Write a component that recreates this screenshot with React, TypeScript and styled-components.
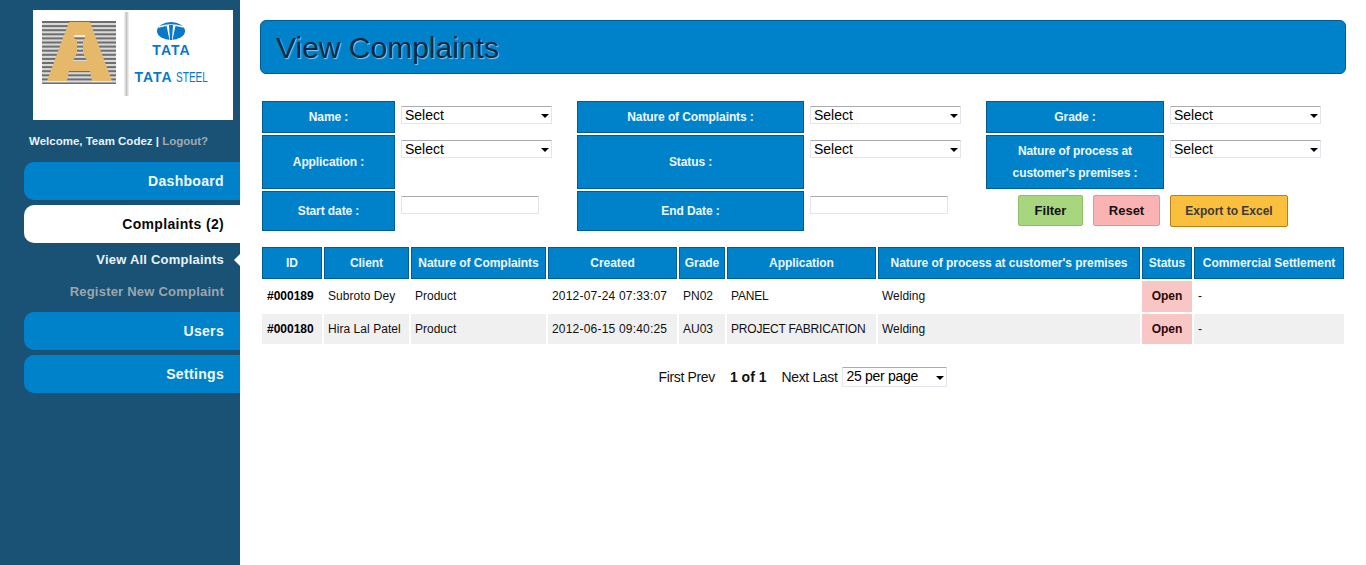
import React from 'react'
import styled, { createGlobalStyle } from 'styled-components'

const GlobalStyle = createGlobalStyle`
  html, body {
    margin: 0;
    padding: 0;
    background: #fff;
    font-family: "Liberation Sans", Arial, sans-serif;
  }
`

const BLUE = '#0082cb'
const BLUE_EDGE = '#005c92'

const filters = [
  [
    { label: 'Name :', kind: 'select' },
    { label: 'Nature of Complaints :', kind: 'select' },
    { label: 'Grade :', kind: 'select' },
  ],
  [
    { label: 'Application :', kind: 'select' },
    { label: 'Status :', kind: 'select' },
    { label: "Nature of process at customer's premises :", kind: 'select' },
  ],
  [
    { label: 'Start date :', kind: 'input' },
    { label: 'End Date :', kind: 'input' },
  ],
]

const columns = [
  { title: 'ID', width: 60, spacing: 0 },
  { title: 'Client', width: 85, spacing: 0.05 },
  { title: 'Nature of Complaints', width: 135, spacing: 0 },
  { title: 'Created', width: 129, spacing: 0.2 },
  { title: 'Grade', width: 46, spacing: 0 },
  { title: 'Application', width: 149, spacing: -0.2 },
  { title: "Nature of process at customer's premises", width: 262, spacing: 0 },
  { title: 'Status', width: 50, spacing: 0 },
  { title: 'Commercial Settlement', width: 150, spacing: 0 },
]

const rows = [
  ['#000189', 'Subroto Dey', 'Product', '2012-07-24 07:33:07', 'PN02', 'PANEL', 'Welding', 'Open', '-'],
  ['#000180', 'Hira Lal Patel', 'Product', '2012-06-15 09:40:25', 'AU03', 'PROJECT FABRICATION', 'Welding', 'Open', '-'],
]

const Logo: React.FC = () => (
  <LogoBox>
    <svg width="74" height="63" viewBox="0 0 74 63">
      <rect width="74" height="63" fill="#d9d9d9" />
      {Array.from({ length: 16 }).map((_, i) => (
        <rect key={i} y={i * 4.1} width="74" height="2" fill="#6e6e6e" />
      ))}
      <path
        fillRule="evenodd"
        d="M27 1H48L70 60H50L48 50H27L25 60H5ZM32 14H43V17L41 19V32L45 40H31L35 32V19L32 17Z"
        fill="#e6b96a"
      />
      <path d="M32 14h11v2H32zM5 60h20v1H5zM50 60h20v1H50z" fill="#f3ead6" />
    </svg>
    <LogoRule />
    <TataColumn>
      <svg width="28" height="18" viewBox="0 0 28 18">
        <ellipse cx="14" cy="9" rx="14" ry="9" fill="#0a78c8" />
        <path d="M1.5 5Q14 .8 26.5 5" fill="none" stroke="#fff" strokeWidth="1.5" />
        <path d="M9.5 3.5L12.5 18h3L18.5 3.5z" fill="#fff" />
        <path d="M12 3h4l-1 15h-2z" fill="#0a78c8" />
      </svg>
      <TataWord>TATA</TataWord>
      <SteelWord>
        <b>TATA</b>
        <span>STEEL</span>
      </SteelWord>
    </TataColumn>
  </LogoBox>
)

const SelectField: React.FC<{ text?: string; width?: number; height?: number }> = ({
  text = 'Select',
  width = 151,
  height = 18,
}) => (
  <SelectWrap $width={width} $height={height}>
    <SelectBox defaultValue={text}>
      <option>{text}</option>
    </SelectBox>
  </SelectWrap>
)

const App: React.FC = () => {
  return (
    <Page>
      <GlobalStyle />
      <Sidebar>
        <Logo />
        <Welcome>
          Welcome, Team Codez | <span>Logout?</span>
        </Welcome>
        <NavItem>Dashboard</NavItem>
        <NavItem $active>Complaints (2)</NavItem>
        <SubNav>
          <SubItem $current>View All Complaints</SubItem>
          <SubItem>Register New Complaint</SubItem>
        </SubNav>
        <NavItem>Users</NavItem>
        <NavItem>Settings</NavItem>
      </Sidebar>
      <Main>
        <TitleBar>
          <h1>View Complaints</h1>
        </TitleBar>
        <FilterGrid>
          {filters.map((row) =>
            row.map((f) => (
              <React.Fragment key={f.label}>
                <FilterLabel>{f.label}</FilterLabel>
                <FilterCell>{f.kind === 'select' ? <SelectField /> : <DateInput type="text" />}</FilterCell>
              </React.Fragment>
            )),
          )}
          <ButtonCell>
            <ActionButton $bg="#a7d67e" $edge="#8cbf66">Filter</ActionButton>
            <ActionButton $bg="#fab2b2" $edge="#ea9292" $width={67}>Reset</ActionButton>
            <ExportButton>Export to Excel</ExportButton>
          </ButtonCell>
        </FilterGrid>
        <DataTable>
          <colgroup>
            {columns.map((c) => (
              <col key={c.title} style={{ width: c.width }} />
            ))}
          </colgroup>
          <thead>
            <tr>
              {columns.map((c) => (
                <HeadCell key={c.title}>{c.title}</HeadCell>
              ))}
            </tr>
          </thead>
          <tbody>
            {rows.map((r, i) => (
              <BodyRow key={r[0]} $alt={i % 2 === 1}>
                {r.map((v, j) => {
                  if (j === 0) return <IdCell key={j}>{v}</IdCell>
                  if (j === 7) return <StatusCell key={j}>{v}</StatusCell>
                  return <BodyCell key={j} $spacing={columns[j].spacing}>{v}</BodyCell>
                })}
              </BodyRow>
            ))}
          </tbody>
        </DataTable>
        <Pager>
          <span>First Prev</span>
          <PagerCount>1 of 1</PagerCount>
          <span>Next Last</span>
          <SelectField text="25 per page" width={105} height={20} />
        </Pager>
      </Main>
    </Page>
  )
}

export default App

const Page = styled.div`
  display: flex;
  height: 565px;
  overflow: hidden;
`

const Sidebar = styled.aside`
  width: 240px;
  flex: none;
  background-color: #1a5276;
  padding-top: 10px;
  box-sizing: border-box;
`

const LogoBox = styled.div`
  width: 200px;
  height: 110px;
  margin-left: 33px;
  background: #fff;
  display: flex;
  align-items: flex-start;
  padding: 11px 0 0 9px;
  box-sizing: border-box;
`

const LogoRule = styled.div`
  width: 5px;
  height: 84px;
  margin: -9px 0 0 8px;
  background: linear-gradient(to right, #f6f6f6, #c4c4c4, #f6f6f6);
`

const TataColumn = styled.div`
  width: 84px;
  padding-top: 1px;
  display: flex;
  flex-direction: column;
  align-items: center;
`

const TataWord = styled.div`
  font-size: 14px;
  line-height: 12px;
  font-weight: bold;
  font-kerning: none;
  color: #0a78c8;
  margin-top: 4px;
`

const SteelWord = styled.div`
  display: flex;
  gap: 5px;
  align-items: baseline;
  font-size: 14px;
  line-height: 12px;
  color: #0a78c8;
  margin-top: 15px;
  white-space: nowrap;
  b {
    font-kerning: none;
    letter-spacing: -0.1px;
  }
  span {
    display: inline-block;
    width: 31px;
    transform: scaleX(0.72);
    transform-origin: left center;
  }
`

const Welcome = styled.div`
  margin: 14px 0 14px 29px;
  font-size: 11.5px;
  line-height: 14px;
  font-weight: bold;
  color: #e8f4fc;
  span {
    color: #a2a9ae;
  }
`

const NavItem = styled.div<{ $active?: boolean }>`
  height: 38px;
  line-height: 38px;
  margin: 0 0 5px 24px;
  padding-right: 16px;
  border-radius: 10px 0 0 10px;
  text-align: right;
  font-size: 14px;
  letter-spacing: 0.32px;
  font-weight: bold;
  background: ${(p) => (p.$active ? '#fff' : BLUE)};
  color: ${(p) => (p.$active ? '#0a0a0a' : '#f2f9fd')};
`

const SubNav = styled.div`
  margin: 0 0 8px;
  display: flex;
  flex-direction: column;
  gap: 8px;
`

const SubItem = styled.div<{ $current?: boolean }>`
  position: relative;
  height: 24px;
  line-height: 24px;
  padding-right: 16px;
  text-align: right;
  font-size: 13px;
  letter-spacing: 0.22px;
  font-weight: bold;
  color: ${(p) => (p.$current ? '#e8f4fc' : '#9da6ac')};
  ${(p) =>
    p.$current &&
    `&::after {
      content: '';
      position: absolute;
      right: 0;
      top: 6px;
      border: 6px solid transparent;
      border-left-width: 0;
      border-right: 6px solid #fff;
    }`}
`

const Main = styled.main`
  flex: 1;
  padding: 20px 20px 0 20px;
  min-width: 0;
`

const TitleBar = styled.div`
  height: 54px;
  box-sizing: border-box;
  background: ${BLUE};
  border: 1px solid ${BLUE_EDGE};
  border-radius: 6px;
  padding-left: 15px;
  h1 {
    margin: 0;
    font-size: 30px;
    line-height: 54px;
    font-weight: normal;
    color: #022a47;
    text-shadow: 1px 1px 1px #8ec8ec;
  }
`

const FilterGrid = styled.div`
  display: grid;
  grid-template-columns: 133px 170px 227px 170px 178px 150px;
  grid-template-rows: 32px 54px 40px;
  column-gap: 6px;
  row-gap: 2px;
  margin: 27px 0 14px 2px;
`

const FilterLabel = styled.div`
  background: ${BLUE};
  border: 1px solid ${BLUE_EDGE};
  box-sizing: border-box;
  color: #eef8fe;
  font-size: 12px;
  letter-spacing: -0.1px;
  font-weight: bold;
  line-height: 22px;
  text-align: center;
  display: flex;
  align-items: center;
  justify-content: center;
  padding: 0 14px;
`

const FilterCell = styled.div`
  padding-top: 5px;
`

const SelectWrap = styled.div<{ $width: number; $height: number }>`
  position: relative;
  width: ${(p) => p.$width}px;
  height: ${(p) => p.$height}px;
  &::after {
    content: '';
    position: absolute;
    right: 3px;
    top: ${(p) => Math.round(p.$height / 2) - 1}px;
    border-style: solid;
    border-width: 4px 4px 0;
    border-color: #000 transparent transparent;
    pointer-events: none;
  }
`

const SelectBox = styled.select`
  appearance: none;
  display: block;
  width: 100%;
  height: 100%;
  margin: 0;
  padding: 0 0 2px 3px;
  box-sizing: border-box;
  background: #fff;
  border: 1px solid #e4e4ec;
  border-top-color: #aaaab4;
  border-radius: 1px;
  font-family: "Liberation Sans", Arial, sans-serif;
  font-size: 14px;
  color: #000;
`

const DateInput = styled.input`
  display: block;
  width: 138px;
  height: 18px;
  box-sizing: border-box;
  margin: 0;
  padding: 0 3px;
  background: #fff;
  border: 1px solid #e4e4ec;
  border-top-color: #aaaab4;
  border-radius: 1px;
`

const ButtonCell = styled.div`
  grid-column: 5 / span 2;
  display: flex;
  align-items: flex-start;
  padding: 4px 0 0 32px;
  gap: 10px;
`

const ActionButton = styled.button<{ $bg: string; $edge: string; $width?: number }>`
  width: ${(p) => p.$width ?? 65}px;
  height: 31px;
  padding: 0;
  box-sizing: border-box;
  background: ${(p) => p.$bg};
  border: 1px solid ${(p) => p.$edge};
  border-radius: 2px;
  font-family: "Liberation Sans", Arial, sans-serif;
  font-size: 13px;
  font-weight: bold;
  color: #111;
`

const ExportButton = styled.button`
  width: 118px;
  height: 32px;
  padding: 0;
  box-sizing: border-box;
  background: #fbbf3e;
  border: 1px solid #b8801c;
  border-radius: 2px;
  font-family: "Liberation Sans", Arial, sans-serif;
  font-size: 12px;
  font-weight: bold;
  color: #3a3a3a;
`

const DataTable = styled.table`
  table-layout: fixed;
  width: 1086px;
  margin: 0;
  border-collapse: separate;
  border-spacing: 2px;
  font-size: 12px;
`

const HeadCell = styled.th`
  height: 32px;
  padding: 0;
  box-sizing: border-box;
  background: ${BLUE};
  border: 1px solid ${BLUE_EDGE};
  color: #eef8fe;
  font-size: 12px;
  letter-spacing: -0.05px;
  font-weight: bold;
  text-align: center;
  white-space: nowrap;
`

const BodyRow = styled.tr<{ $alt?: boolean }>`
  height: ${(p) => (p.$alt ? 30 : 31)}px;
  td {
    background: ${(p) => (p.$alt ? '#f0f0f0' : 'transparent')};
    padding-bottom: ${(p) => (p.$alt ? 0 : 2)}px;
  }
`

const BodyCell = styled.td<{ $spacing?: number }>`
  padding: 0 4px;
  color: #111;
  white-space: nowrap;
  overflow: hidden;
  letter-spacing: ${(p) => p.$spacing ?? 0}px;
`

const IdCell = styled(BodyCell)`
  padding: 0 5px;
  font-weight: bold;
  color: #000;
`

const StatusCell = styled.td`
  padding: 0;
  && {
    background: #f9c6c6;
  }
  text-align: center;
  font-weight: bold;
  color: #2a0808;
`

const Pager = styled.div`
  display: flex;
  align-items: center;
  justify-content: center;
  gap: 5px;
  width: 1086px;
  margin-top: 21px;
  font-size: 14px;
  letter-spacing: -0.35px;
  color: #111;
  select {
    letter-spacing: -0.3px;
  }
`

const PagerCount = styled.b`
  margin: 0 10px;
  letter-spacing: 0;
`
